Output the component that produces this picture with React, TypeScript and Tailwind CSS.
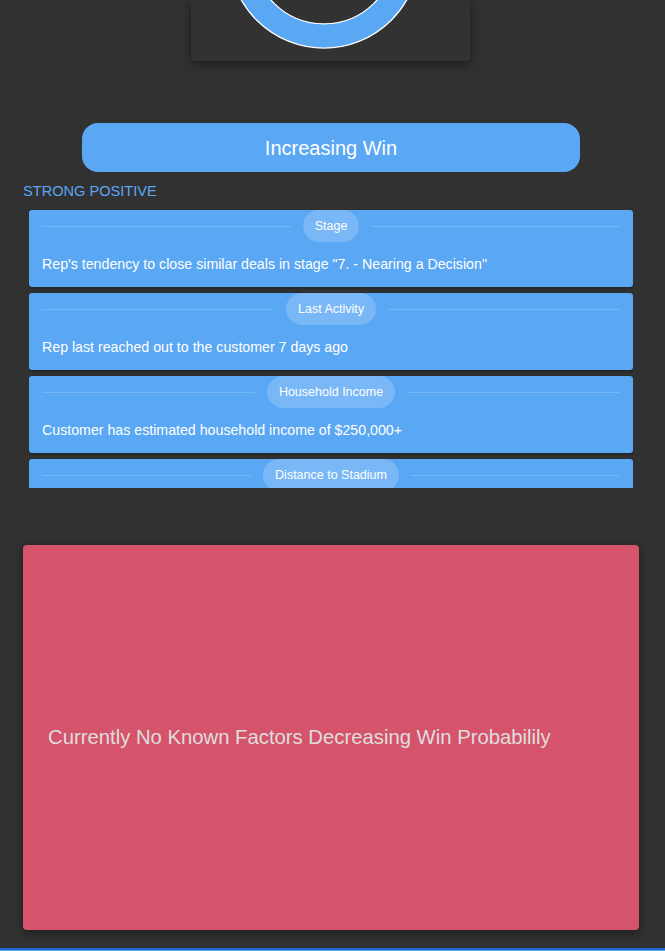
import React from "react";

const factors = [
  { label: "Stage", text: 'Rep\'s tendency to close similar deals in stage "7. - Nearing a Decision"' },
  { label: "Last Activity", text: "Rep last reached out to the customer 7 days ago" },
  { label: "Household Income", text: "Customer has estimated household income of $250,000+" },
  { label: "Distance to Stadium", text: "Customer lives within 10 miles of the stadium" },
];

function FactorCard({ label, text }: { label: string; text: string }) {
  return (
    <div className="rounded-[3px] bg-[#5aa7f4] px-[13px] pb-[13px] shadow-[0_1px_3px_rgba(0,0,0,0.4)]">
      <div className="flex h-[32px] items-center gap-[12px]">
        <div className="h-px flex-1 bg-[#74b6f6]" />
        <div className="flex h-[32px] items-center rounded-full bg-[#79b7f6] px-[12px] text-[12.5px] text-white">
          {label}
        </div>
        <div className="h-px flex-1 bg-[#74b6f6]" />
      </div>
      <p className="mt-[12px] text-[14.2px] leading-[20px] text-white">{text}</p>
    </div>
  );
}

export default function App() {
  return (
    <div className="min-h-[951px] w-full bg-[#313131] font-['Liberation_Sans',Arial,sans-serif]">
      <div className="mx-auto h-[61px] w-[279px] translate-x-[-2px] overflow-hidden rounded-b-[4px] bg-[#323232] shadow-[0_3px_10px_rgba(0,0,0,0.45)]">
        <svg width="279" height="61" viewBox="0 0 279 61">
          <circle cx="133" cy="-47" r="83" fill="none" stroke="#ffffff" strokeWidth="25.5" />
          <circle cx="133" cy="-47" r="83" fill="none" stroke="#5aa7f4" strokeWidth="23" />
        </svg>
      </div>

      <div className="ml-[82px] mt-[62px] flex h-[49px] w-[498px] items-center justify-center rounded-[16px] bg-[#5aa7f4] text-[20px] text-white">
        Increasing Win
      </div>

      <div className="ml-[23px] mt-[11px] text-[14.6px] leading-[16px] text-[#5aa7f4]">STRONG POSITIVE</div>

      <div className="ml-[29px] mt-[11px] h-[278px] w-[604px] overflow-hidden">
        <div className="flex flex-col gap-[6px]">
          {factors.map((f) => (
            <FactorCard key={f.label} label={f.label} text={f.text} />
          ))}
        </div>
      </div>

      <div className="ml-[23px] mt-[57px] flex h-[385px] w-[616px] items-center rounded-[4px] bg-[#d6546b] px-[25px] shadow-[0_2px_8px_rgba(0,0,0,0.45)]">
        <p className="text-[20.3px] text-[#dedede]">Currently No Known Factors Decreasing Win Probabilily</p>
      </div>

      <div className="mt-[18px] h-[3px] border-t-2 border-[#1d6bd0] bg-[#5aa0ee]" />
    </div>
  );
}
